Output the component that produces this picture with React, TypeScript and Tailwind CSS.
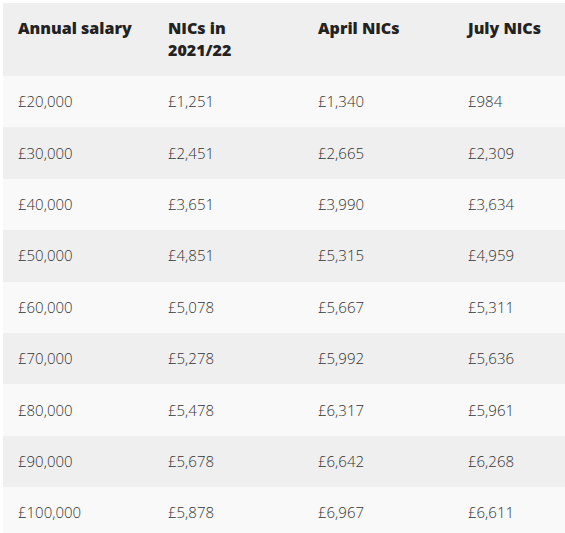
const rows = [
  ["£20,000", "£1,251", "£1,340", "£984"],
  ["£30,000", "£2,451", "£2,665", "£2,309"],
  ["£40,000", "£3,651", "£3,990", "£3,634"],
  ["£50,000", "£4,851", "£5,315", "£4,959"],
  ["£60,000", "£5,078", "£5,667", "£5,311"],
  ["£70,000", "£5,278", "£5,992", "£5,636"],
  ["£80,000", "£5,478", "£6,317", "£5,961"],
  ["£90,000", "£5,678", "£6,642", "£6,268"],
  ["£100,000", "£5,878", "£6,967", "£6,611"],
];

const headers = ["Annual salary", "NICs in 2021/22", "April NICs", "July NICs"];

export default function App() {
  return (
    <div className="w-[565px] h-[533px] overflow-hidden bg-white pl-[3px] pt-[3px] font-['Open_Sans','Lato',sans-serif]">
      <table className="w-[600px] table-fixed border-collapse text-[15px]">
        <thead>
          <tr className="bg-[#efefef]">
            {headers.map((h) => (
              <th
                key={h}
                className="w-[150px] px-[15px] pt-[14px] pb-[15px] text-left align-top text-[16px] font-extrabold leading-[22px] text-[#222]"
              >
                <span className={h === "NICs in 2021/22" ? "block w-[80px]" : "block"}>{h}</span>
              </th>
            ))}
          </tr>
        </thead>
        <tbody>
          {rows.map((r, i) => (
            <tr key={i} className={i % 2 === 0 ? "bg-[#f9f9f9]" : "bg-[#efefef]"}>
              {r.map((c, j) => (
                <td key={j} className="h-[51.4px] px-[15px] align-middle font-light leading-[21px] text-[#333]">
                  {c}
                </td>
              ))}
            </tr>
          ))}
        </tbody>
      </table>
    </div>
  );
}
